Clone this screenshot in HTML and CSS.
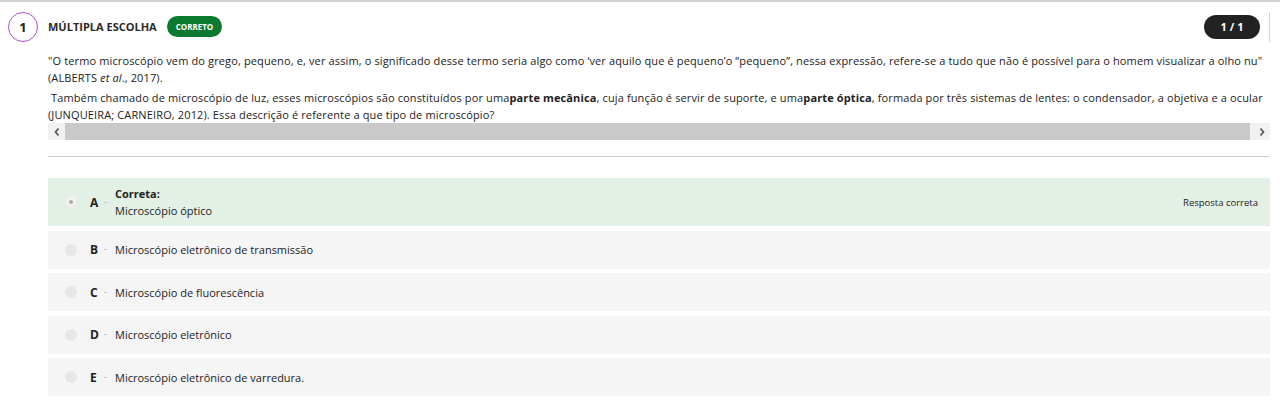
FILE: index.html
```html
<!DOCTYPE html>
<html lang="pt-BR">
<head>
<meta charset="utf-8">
<title>Questão 1</title>
<link rel="stylesheet" href="styles.css">
</head>
<body>
<div class="question">
  <div class="q-header">
    <div class="q-num">1</div>
    <div class="q-title">MÚLTIPLA ESCOLHA</div>
    <span class="q-badge">CORRETO</span>
    <div class="q-spacer"></div>
    <div class="q-count">1 / 1</div>
    <div class="q-vline"></div>
  </div>
  <div class="q-body">
    <div class="statement">
      <p class="par">"O termo microscópio vem do grego, pequeno, e, ver assim, o significado desse termo seria algo como ‘ver aquilo que é pequeno’o “pequeno”, nessa expressão, refere-se a tudo que não é possível para o homem visualizar a olho nu"<br>(ALBERTS <em>et al</em>., 2017).</p>
      <p class="par">&nbsp;Também chamado de microscópio de luz, esses microscópios são constituídos por uma<b>parte mecânica</b>, cuja função é servir de suporte, e uma<b>parte óptica</b>, formada por três sistemas de lentes: o condensador, a objetiva e a ocular<br>(JUNQUEIRA; CARNEIRO, 2012). Essa descrição é referente a que tipo de microscópio?</p>
    </div>
    <div class="hscroll">
      <div class="hs-btn"><svg width="8" height="10" viewBox="0 0 8 10"><path d="M5.5 1.5 L2.5 5 L5.5 8.5" fill="none" stroke="#505050" stroke-width="1.6"/></svg></div>
      <div class="hs-track"></div>
      <div class="hs-btn"><svg width="8" height="10" viewBox="0 0 8 10"><path d="M2.5 1.5 L5.5 5 L2.5 8.5" fill="none" stroke="#505050" stroke-width="1.6"/></svg></div>
    </div>
    <div class="divider"></div>
    <ul class="options">
      <li class="opt opt-correct">
        <span class="radio radio-on"></span>
        <span class="letter">A</span>
        <span class="dash"></span>
        <div class="opt-text"><b>Correta:</b><span>Microscópio óptico</span></div>
        <span class="opt-note">Resposta correta</span>
      </li>
      <li class="opt">
        <span class="radio"></span>
        <span class="letter">B</span>
        <span class="dash"></span>
        <div class="opt-text"><span>Microscópio eletrônico de transmissão</span></div>
      </li>
      <li class="opt">
        <span class="radio"></span>
        <span class="letter">C</span>
        <span class="dash"></span>
        <div class="opt-text"><span>Microscópio de fluorescência</span></div>
      </li>
      <li class="opt">
        <span class="radio"></span>
        <span class="letter">D</span>
        <span class="dash"></span>
        <div class="opt-text"><span>Microscópio eletrônico</span></div>
      </li>
      <li class="opt">
        <span class="radio"></span>
        <span class="letter">E</span>
        <span class="dash"></span>
        <div class="opt-text"><span>Microscópio eletrônico de varredura.</span></div>
      </li>
    </ul>
  </div>
</div>
</body>
</html>
```

FILE: styles.css
```css
* { box-sizing: border-box; }
html, body { margin: 0; padding: 0; background: #fff; }
body {
  font-family: "Open Sans", "Liberation Sans", sans-serif;
  color: #222;
  font-size: 11px;
}
.question {
  border-top: 2px solid #d2d2d2;
  padding: 9px 10px 0 8px;
}
.q-header {
  display: flex;
  align-items: center;
  height: 31px;
}
.q-num {
  width: 30px;
  height: 30px;
  border: 1px solid #b34fd2;
  border-radius: 50%;
  display: flex;
  align-items: center;
  justify-content: center;
  font-weight: 700;
  font-size: 13px;
  color: #222;
}
.q-title {
  margin-left: 10px;
  font-weight: 700;
  font-size: 11px;
  color: #2a2a2a;
}
.q-badge {
  margin-left: 10px;
  background: #0b7a30;
  color: #fff;
  font-weight: 700;
  font-size: 8px;
  height: 21px;
  padding: 0 9px;
  border-radius: 11px;
  display: flex;
  align-items: center;
}
.q-spacer { flex: 1; }
.q-count {
  background: #222;
  color: #fff;
  font-weight: 700;
  font-size: 11px;
  width: 56px;
  height: 24px;
  border-radius: 12px;
  display: flex;
  align-items: center;
  justify-content: center;
}
.q-vline {
  width: 1px;
  height: 30px;
  background: #d2d2d2;
  margin-left: 9px;
}
.q-body {
  padding-left: 40px;
}
.statement {
  padding-top: 10px;
  font-size: 11px;
  line-height: 17px;
  letter-spacing: 0.13px;
  white-space: nowrap;
  overflow: hidden;
}
.par { margin: 0 0 3px 0; }
.par:last-child { margin-bottom: 0; }
.par b { font-weight: 700; }
.hscroll {
  display: flex;
  height: 17px;
  background: #f1f1f1;
}
.hs-btn {
  width: 17px;
  display: flex;
  align-items: center;
  justify-content: center;
  background: #f1f1f1;
}
.hs-track {
  flex: 1;
  background: #c9c9c9;
  margin-right: 3px;
}
.divider {
  height: 1px;
  background: #cfcfcf;
  margin-top: 16px;
  margin-bottom: 21px;
}
.options {
  list-style: none;
  margin: 0;
  padding: 0;
  display: flex;
  flex-direction: column;
  gap: 4.5px;
}
.opt {
  display: flex;
  align-items: center;
  background: #f5f5f5;
  height: 38px;
  padding: 0 12px 0 17px;
}
.opt-correct {
  background: #e3f0e6;
  height: 48px;
}
.radio {
  width: 12px;
  height: 12px;
  border-radius: 50%;
  background: #e7e7e7;
  display: flex;
  align-items: center;
  justify-content: center;
  flex: none;
}
.radio-on { background: #f2f2f2; box-shadow: 0 0 0 1px #e8e8e8 inset; }
.radio-on::after {
  content: "";
  width: 4px;
  height: 4px;
  border-radius: 50%;
  background: #aaa;
}
.letter {
  margin-left: 13px;
  width: 9px;
  font-weight: 700;
  font-size: 12px;
  color: #222;
}
.dash {
  width: 3px;
  height: 1px;
  background: #c8c8c8;
  margin-left: 5px;
  margin-right: 8px;
}
.opt-text {
  display: flex;
  flex-direction: column;
  line-height: 17px;
  flex: 1;
}
.opt-text b { font-weight: 700; }
.opt-note {
  font-size: 9.5px;
  color: #222;
  align-self: center;
  padding-top: 1px;
}
```
